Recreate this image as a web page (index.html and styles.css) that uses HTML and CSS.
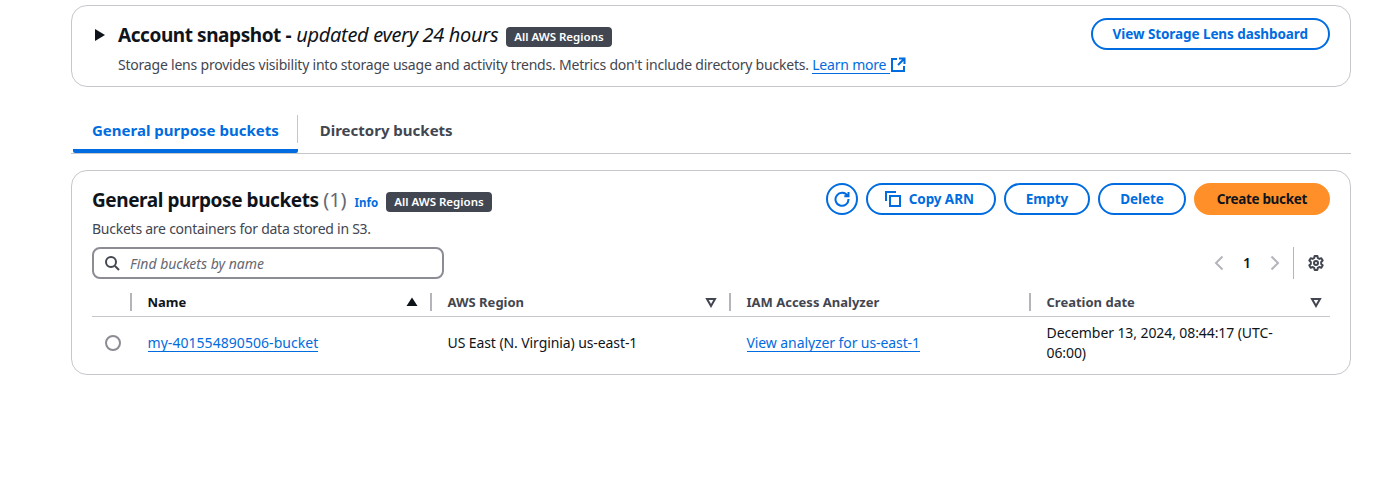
FILE: index.html
```html
<!DOCTYPE html>
<html lang="en">
<head>
    <meta charset="UTF-8">
    <meta name="viewport" content="width=device-width, initial-scale=1.0">
    <title>Amazon S3 buckets</title>
    <link rel="stylesheet" href="styles.css">
</head>
<body>
    <div class="page">
        <section class="card snapshot">
            <div class="snapshot-main">
                <div class="snapshot-title">
                    <svg class="caret" width="12" height="12" viewBox="0 0 12 12"><path d="M1 0 11 6 1 12z"/></svg>
                    <h2><b>Account snapshot -</b> <i>updated every 24 hours</i></h2>
                    <span class="badge">All AWS Regions</span>
                </div>
                <p class="desc snapshot-desc">Storage lens provides visibility into storage usage and activity trends. Metrics don't include directory buckets. <a class="link" href="#">Learn more&nbsp;</a>
                    <svg class="external" width="16" height="16" viewBox="0 0 16 16" fill="none" stroke="#006ce0" stroke-width="2"><path d="M7 2H2v12h12V9M9 1.5h5.5V7M14 2 8 8"/></svg>
                </p>
            </div>
            <button class="btn">View Storage Lens dashboard</button>
        </section>

        <nav class="tabs">
            <a class="tab active" href="#">General purpose buckets</a>
            <a class="tab" href="#">Directory buckets</a>
        </nav>

        <section class="card buckets">
            <div class="buckets-head">
                <div>
                    <div class="buckets-title">
                        <h2>General purpose buckets <span class="count">(1)</span></h2>
                        <a class="info" href="#">Info</a>
                        <span class="badge">All AWS Regions</span>
                    </div>
                    <p class="desc buckets-desc">Buckets are containers for data stored in S3.</p>
                </div>
                <div class="actions">
                    <button class="btn btn-icon" aria-label="Refresh">
                        <svg width="16" height="16" viewBox="0 0 16 16" fill="none" stroke="#006ce0" stroke-width="2"><path d="M13.6 5A6.5 6.5 0 1 0 14.5 8M14.5 1v4.2h-4.2"/></svg>
                    </button>
                    <button class="btn copy">
                        <svg width="16" height="16" viewBox="0 0 16 16" fill="none" stroke="#006ce0" stroke-width="2"><path d="M1 10V1h10M5 5h10v10H5z"/></svg>
                        Copy ARN
                    </button>
                    <button class="btn">Empty</button>
                    <button class="btn">Delete</button>
                    <button class="btn btn-primary">Create bucket</button>
                </div>
            </div>

            <div class="tools">
                <label class="search">
                    <svg width="16" height="16" viewBox="0 0 16 16" fill="none" stroke="#424650" stroke-width="2"><circle cx="7" cy="7" r="5"/><path d="m11 11 4 4"/></svg>
                    <input type="text" placeholder="Find buckets by name">
                </label>
                <div class="pager">
                    <svg width="16" height="16" viewBox="0 0 16 16" fill="none" stroke="#b4b4bb" stroke-width="2"><path d="M11.500 1.500 5 8l6.500 6.500"/></svg>
                    <span class="page-num">1</span>
                    <svg width="16" height="16" viewBox="0 0 16 16" fill="none" stroke="#b4b4bb" stroke-width="2"><path d="M4.500 1.500 11 8l-6.500 6.500"/></svg>
                    <span class="pager-sep"></span>
                    <svg class="gear" width="16" height="16" viewBox="0 0 16 16" fill="none" stroke="#424650" stroke-width="2" stroke-linejoin="round"><path d="M6.600 1h2.800l.4 2 1.500.9 2-.7 1.400 2.400-1.500 1.400v1.900l1.500 1.300-1.400 2.500-2-.7-1.500.9-.4 2H6.600l-.4-2-1.500-.9-2 .7L1.300 10.200l1.500-1.300V7L1.300 5.600l1.400-2.400 2 .7 1.500-.9z"/><circle cx="8" cy="8" r="2"/></svg>
                </div>
            </div>

            <div class="table">
                <div class="th th-select"></div>
                <div class="th th-name">Name
                    <svg width="12" height="12" viewBox="0 0 12 12" fill="#0f141a"><path d="M6 1.500 11.500 10H.5z"/></svg>
                </div>
                <div class="th">AWS Region
                    <svg width="12" height="12" viewBox="0 0 12 12" fill="none" stroke="#424650" stroke-width="2"><path d="M2 3h8L6 10z"/></svg>
                </div>
                <div class="th">IAM Access Analyzer</div>
                <div class="th th-last">Creation date
                    <svg width="12" height="12" viewBox="0 0 12 12" fill="none" stroke="#424650" stroke-width="2"><path d="M2 3h8L6 10z"/></svg>
                </div>

                <div class="td td-select"><span class="radio"></span></div>
                <div class="td"><a class="link bucket-link" href="#">my-401554890506-bucket</a></div>
                <div class="td">US East (N. Virginia) us-east-1</div>
                <div class="td"><a class="link" href="#">View analyzer for us-east-1</a></div>
                <div class="td">December 13, 2024, 08:44:17 (UTC-06:00)</div>
            </div>
        </section>
    </div>
</body>
</html>
```

FILE: styles.css
```css
* {
    box-sizing: border-box;
}
body {
    margin: 0;
    background-color: #ffffff;
    color: #0f141a;
    font-family: "Noto Sans", Arial, sans-serif;
    font-size: 14px;
    line-height: 20px;
}
h2, p {
    margin: 0;
}
.page {
    padding: 5px 22px 0 71px;
}
.card {
    border: 1px solid #c6c6cd;
    border-radius: 16px;
}
.snapshot {
    display: flex;
    justify-content: space-between;
    height: 82px;
    padding: 12px 20px 0 22px;
}
.snapshot-title {
    display: flex;
    align-items: center;
    height: 34px;
}
.caret {
    margin-right: 12px;
    fill: #0f141a;
}
.snapshot-title h2, .buckets-title h2 {
    font-size: 20px;
    font-weight: 400;
    line-height: 34px;
    white-space: nowrap;
}
.snapshot-title b, .buckets-title h2 {
    font-size: 19px;
    font-weight: 700;
    letter-spacing: -0.43px;
}
.snapshot-title i {
    letter-spacing: -0.33px;
}
.snapshot-desc {
    margin-top: 3px;
    padding-left: 24px;
    display: flex;
    align-items: center;
    letter-spacing: -0.21px;
}
.badge {
    margin-left: 8px;
    margin-top: 4px;
    padding: 0 8px;
    height: 20px;
    border-radius: 4px;
    background-color: #424650;
    color: #ffffff;
    font-size: 11.5px;
    font-weight: 600;
    line-height: 20px;
    letter-spacing: 0;
    white-space: nowrap;
}
.desc {
    color: #424650;
    white-space: pre;
}
.buckets-desc {
    margin-top: 2px;
    letter-spacing: -0.25px;
}
.link {
    color: #006ce0;
    text-decoration: none;
    border-bottom: 1px solid #006ce0;
    line-height: 17px;
    display: inline-block;
}
.bucket-link {
    letter-spacing: 0.05px;
}
.external {
    margin-left: 0;
}
.btn {
    display: inline-flex;
    align-items: center;
    justify-content: center;
    gap: 8px;
    height: 32px;
    padding: 0 20px;
    border: 2px solid #006ce0;
    border-radius: 20px;
    background-color: #ffffff;
    color: #006ce0;
    font-family: inherit;
    font-size: 13.5px;
    font-weight: 700;
    letter-spacing: -0.08px;
    white-space: nowrap;
}
.btn-icon {
    width: 32px;
    padding: 0;
}
.copy {
    padding: 0 20px 0 17px;
}
.btn-primary {
    padding: 0 21px;
    border-color: #ff9029;
    background-color: #ff9029;
    color: #0f141a;
    letter-spacing: -0.33px;
}
.tabs {
    display: flex;
    margin-top: 23px;
    height: 44px;
    border-bottom: 1px solid #c6c6cd;
}
.tab {
    position: relative;
    height: 43px;
    padding: 10px 20px 0 22px;
    color: #424650;
    font-size: 15px;
    font-weight: 700;
    text-decoration: none;
}
.tab.active {
    color: #006ce0;
    border-bottom: 4px solid #006ce0;
    border-radius: 0 0 2px 2px;
    margin-left: 2px;
    padding: 10px 19px 0 19px;
}
.tab.active::after {
    content: "";
    position: absolute;
    top: 5px;
    right: 0;
    width: 1px;
    height: 28px;
    background-color: #c6c6cd;
}
.buckets {
    margin-top: 16px;
    height: 205px;
    padding: 12px 20px 0 20px;
}
.buckets-head {
    display: flex;
    justify-content: space-between;
}
.buckets-title {
    display: flex;
    align-items: center;
    height: 34px;
}
.count {
    color: #656871;
    font-size: 20px;
    font-weight: 400;
    letter-spacing: 0;
}
.info {
    margin-left: 8px;
    margin-top: 5px;
    color: #006ce0;
    font-size: 11.5px;
    font-weight: 700;
    text-decoration: none;
}
.actions {
    display: flex;
    gap: 8px;
}
.tools {
    display: flex;
    justify-content: space-between;
    align-items: center;
    margin-top: 8px;
}
.search {
    display: flex;
    align-items: center;
    gap: 10px;
    width: 352px;
    height: 32px;
    padding: 0 10px;
    border: 2px solid #8c8c94;
    border-radius: 8px;
}
.search input {
    flex: 1;
    border: none;
    outline: none;
    padding: 0;
    font-family: inherit;
    font-size: 14px;
    font-style: italic;
}
.search input::placeholder {
    color: #656871;
}
.pager {
    display: flex;
    align-items: center;
    height: 32px;
    padding-right: 6px;
}
.page-num {
    width: 40px;
    text-align: center;
    font-weight: 600;
}
.pager-sep {
    width: 1px;
    height: 32px;
    margin: 0 14px 0 10px;
    background-color: #b4b4bb;
}
.table {
    display: grid;
    grid-template-columns: 39px 300px 299px 300px 300px;
    margin-top: 5px;
}
.th {
    position: relative;
    display: flex;
    justify-content: space-between;
    align-items: center;
    height: 33px;
    padding: 3px 13px 0 16.5px;
    border-bottom: 1px solid #c6c6cd;
    color: #424650;
    font-size: 13px;
    font-weight: 700;
}
.th::before {
    content: "";
    position: absolute;
    left: -1px;
    top: 9px;
    width: 2px;
    height: 18px;
    background-color: #b4b4bb;
}
.th-select::before {
    display: none;
}
.th-name {
    color: #0f141a;
}
.th-last {
    padding-right: 8px;
}
.td {
    padding: 0 20px 5px 16.5px;
    height: 57px;
    display: flex;
    align-items: center;
    letter-spacing: -0.09px;
}
.td-select {
    padding: 0 0 5px 13px;
}
.radio {
    flex-shrink: 0;
    width: 16px;
    height: 16px;
    border: 2px solid #8c8c94;
    border-radius: 50%;
}
```
